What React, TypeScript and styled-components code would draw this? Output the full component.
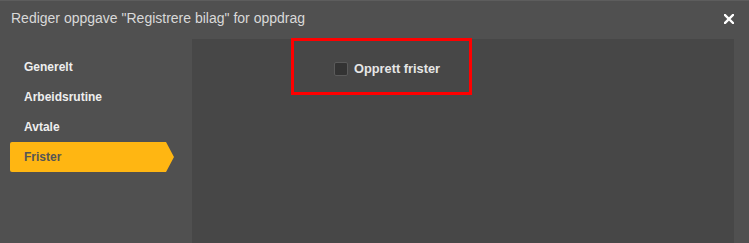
import React from "react";
import styled, { createGlobalStyle } from "styled-components";

const Global = createGlobalStyle`
  html, body { margin: 0; padding: 0; background: #505050; }
  body { font-family: Arial, "Liberation Sans", sans-serif; }
`;

const Dialog = styled.div`
  width: 749px;
  height: 243px;
  background: #505050;
  border-top: 1px solid #5d5d5d;
  box-sizing: border-box;
  display: flex;
  flex-direction: column;
  overflow: hidden;
`;

const Header = styled.div`
  height: 38px;
  display: flex;
  align-items: center;
  justify-content: space-between;
  padding: 0 15px 0 11px;
  box-sizing: border-box;
`;

const Title = styled.div`
  color: #d9d9d9;
  font-size: 14px;
  line-height: 16px;
  margin-top: -5px;
`;

const Close = styled.button`
  border: 0;
  background: none;
  padding: 0;
  width: 10px;
  height: 10px;
  display: flex;
  margin-top: -3px;
  cursor: pointer;
`;

const Body = styled.div`
  flex: 1;
  display: flex;
  padding-right: 15px;
`;

const Sidebar = styled.nav`
  width: 192px;
  padding: 13px 0 0 10px;
  box-sizing: border-box;
  display: flex;
  flex-direction: column;
`;

const NavItem = styled.div<{ $active?: boolean }>`
  height: 30px;
  width: 164px;
  display: flex;
  align-items: center;
  padding-left: 14px;
  box-sizing: border-box;
  font-size: 12px;
  font-weight: bold;
  color: ${(p) => (p.$active ? "#555555" : "#eeeeee")};
  background: ${(p) => (p.$active ? "#ffb612" : "transparent")};
  clip-path: ${(p) =>
    p.$active ? "polygon(0 0, 156px 0, 164px 50%, 156px 100%, 0 100%)" : "none"};
  border-radius: 2px 0 0 2px;
`;

const Panel = styled.main`
  flex: 1;
  background: #474747;
`;

const Highlight = styled.div`
  width: 181px;
  height: 57px;
  margin: -1px 0 0 99px;
  border: 3px solid #ff0000;
  box-sizing: border-box;
  padding: 21px 0 0 40px;
  display: flex;
  align-items: flex-start;
  gap: 6px;
`;

const Checkbox = styled.span`
  width: 14px;
  height: 14px;
  box-sizing: border-box;
  background: #333333;
  border: 1px solid #5a5a5a;
  border-radius: 2px;
  flex-shrink: 0;
`;

const CheckLabel = styled.span`
  color: #e6e6e6;
  font-size: 12.8px;
  font-weight: bold;
  line-height: 14px;
`;

export default function App() {
  const items = ["Generelt", "Arbeidsrutine", "Avtale", "Frister"];
  return (
    <>
      <Global />
      <Dialog>
        <Header>
          <Title>Rediger oppgave "Registrere bilag" for oppdrag</Title>
          <Close aria-label="Lukk">
            <svg width="10" height="10" viewBox="0 0 10 10">
              <path d="M1 1 L9 9 M9 1 L1 9" stroke="#ffffff" strokeWidth="2.4" strokeLinecap="square" />
            </svg>
          </Close>
        </Header>
        <Body>
          <Sidebar>
            {items.map((it) => (
              <NavItem key={it} $active={it === "Frister"}>
                {it}
              </NavItem>
            ))}
          </Sidebar>
          <Panel>
            <Highlight>
              <Checkbox />
              <CheckLabel>Opprett frister</CheckLabel>
            </Highlight>
          </Panel>
        </Body>
      </Dialog>
    </>
  );
}
